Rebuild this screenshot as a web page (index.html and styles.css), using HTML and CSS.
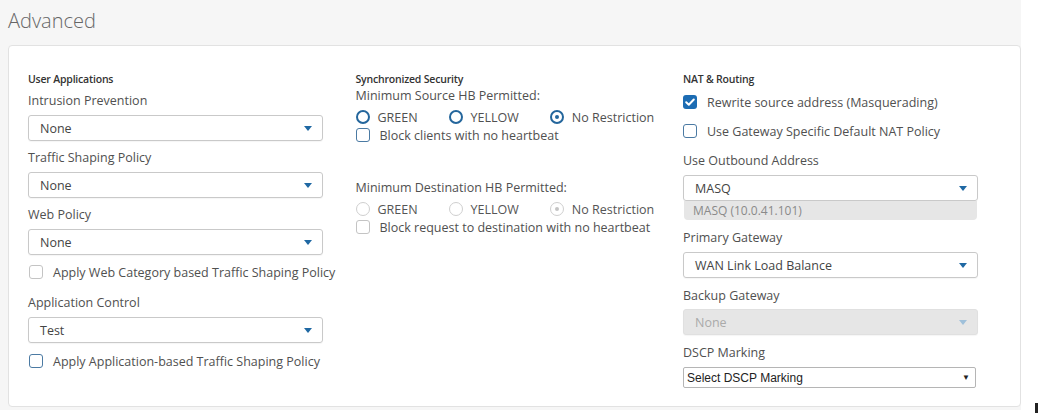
FILE: index.html
```html
<!DOCTYPE html>
<html lang="en">
<head>
  <meta charset="UTF-8">
  <meta name="viewport" content="width=device-width, initial-scale=1.0">
  <title>Advanced</title>
  <link rel="stylesheet" href="styles.css">
</head>
<body>
  <div class="page">
    <h2 class="title">Advanced</h2>
    <div class="card">
      <!-- User applications -->
      <div class="col">
        <div class="group-title">User Applications</div>
        <div class="label first">Intrusion Prevention</div>
        <div class="select"><span>None</span><i class="caret"></i></div>
        <div class="label">Traffic Shaping Policy</div>
        <div class="select"><span>None</span><i class="caret"></i></div>
        <div class="label">Web Policy</div>
        <div class="select"><span>None</span><i class="caret"></i></div>
        <label class="check off web-shaping"><span class="box"></span>Apply Web Category based Traffic Shaping Policy</label>
        <div class="label app-control">Application Control</div>
        <div class="select"><span>Test</span><i class="caret"></i></div>
        <label class="check app-shaping"><span class="box"></span>Apply Application-based Traffic Shaping Policy</label>
      </div>

      <!-- Synchronized security -->
      <div class="col">
        <div class="group-title">Synchronized Security</div>
        <div class="label hb">Minimum Source HB Permitted:</div>
        <div class="radios">
          <label class="radio"><span class="dot"></span>GREEN</label>
          <label class="radio"><span class="dot"></span>YELLOW</label>
          <label class="radio"><span class="dot on"></span>No Restriction</label>
        </div>
        <label class="check hb-check"><span class="box"></span>Block clients with no heartbeat</label>
        <div class="label hb dest">Minimum Destination HB Permitted:</div>
        <div class="radios disabled">
          <label class="radio"><span class="dot"></span>GREEN</label>
          <label class="radio"><span class="dot"></span>YELLOW</label>
          <label class="radio"><span class="dot on"></span>No Restriction</label>
        </div>
        <label class="check off hb-check"><span class="box"></span>Block request to destination with no heartbeat</label>
      </div>

      <!-- NAT & routing -->
      <div class="col nat">
        <div class="group-title">NAT &amp; Routing</div>
        <label class="check checked masq"><span class="box">
          <svg viewBox="0 0 14 14" width="14" height="14"><path d="M3.2 7.2l2.6 2.5 5-5.2" fill="none" stroke="#fff" stroke-width="2" stroke-linecap="round" stroke-linejoin="round"/></svg>
        </span>Rewrite source address (Masquerading)</label>
        <label class="check gw-nat"><span class="box"></span>Use Gateway Specific Default NAT Policy</label>
        <div class="label outbound">Use Outbound Address</div>
        <div class="select"><span>MASQ</span><i class="caret"></i></div>
        <div class="hint">MASQ (10.0.41.101)</div>
        <div class="label">Primary Gateway</div>
        <div class="select"><span>WAN Link Load Balance</span><i class="caret"></i></div>
        <div class="label">Backup Gateway</div>
        <div class="select disabled"><span>None</span><i class="caret"></i></div>
        <div class="label">DSCP Marking</div>
        <div class="native-select"><span>Select DSCP Marking</span><span class="arrow">&#9660;</span></div>
      </div>
    </div>
  </div>
  <div class="corner"></div>
</body>
</html>
```

FILE: styles.css
```css
body {
  margin: 0;
  background: #fff;
  font-family: "Open Sans", Arial, sans-serif;
  color: #4a4a4a;
}
.page {
  width: 1021px;
  height: 410px;
  background: #f6f6f6;
  padding: 0 0 0 8px;
  box-sizing: border-box;
}
.title {
  margin: 0;
  padding-top: 7px;
  height: 45px;
  box-sizing: border-box;
  font-size: 20px;
  font-weight: 300;
  line-height: 28px;
  color: #666;
}
.card {
  background: #fff;
  border: 1px solid #e2e2e2;
  border-radius: 4px;
  height: 362px;
  box-sizing: border-box;
  padding: 26px 0 0 19px;
  display: grid;
  grid-template-columns: 295px 295px 295px;
  column-gap: 32.5px;
}
.col {
  display: flex;
  flex-direction: column;
}
.group-title {
  font-size: 10.5px;
  font-weight: 600;
  line-height: 14px;
  color: #333;
  letter-spacing: -0.2px;
}
.label {
  font-size: 12.5px;
  line-height: 16px;
  margin-top: 9px;
  color: #505050;
}
.label.first { margin-top: 7px; }
.label.app-control { margin-top: 14px; }
.label.hb { margin-top: 2px; }
.label.hb.dest { margin-top: 36px; }
.nat .label { margin-top: 10px; }
.nat .label.outbound { margin-top: 13px; }

.select {
  margin-top: 6px;
  height: 26px;
  border: 1px solid #c9c9c9;
  border-radius: 3px;
  box-sizing: border-box;
  display: flex;
  align-items: center;
  justify-content: space-between;
  padding: 0 10px 0 11px;
  font-size: 12.5px;
  color: #444;
  box-shadow: 0 1px 1px rgba(0, 0, 0, 0.04);
}
.select.disabled {
  background: #e6e6e6;
  border-color: #e0e0e0;
  color: #aaa;
  margin-top: 5px;
}
.caret {
  width: 0;
  height: 0;
  border-left: 4px solid transparent;
  border-right: 4px solid transparent;
  border-top: 5px solid #1f68a3;
}
.select.disabled .caret { border-top-color: #9fc0da; }

.hint {
  height: 19px;
  background: #e6e6e6;
  border-radius: 0 0 4px 4px;
  margin: 0 1px;
  font-size: 12px;
  line-height: 19px;
  padding-left: 9px;
  color: #8a8a8a;
}

.native-select {
  margin-top: 6px;
  width: 293px;
  height: 21px;
  border: 1px solid #b5b5b5;
  border-radius: 2px;
  box-sizing: border-box;
  display: flex;
  align-items: center;
  justify-content: space-between;
  padding: 0 5px 0 3px;
  font-family: "Liberation Sans", Arial, sans-serif;
  font-size: 12px;
  color: #222;
}
.native-select .arrow {
  font-size: 8px;
  color: #222;
}

.check {
  display: flex;
  align-items: center;
  height: 18px;
  font-size: 12.5px;
  color: #505050;
  white-space: nowrap;
}
.check .box {
  width: 14px;
  height: 14px;
  box-sizing: border-box;
  border: 1.5px solid #4b7aa3;
  border-radius: 3px;
  margin: 0 10px 0 1px;
  flex: none;
  display: flex;
}
.check.off .box { border-color: #c4c4c4; }
.check.checked .box {
  background: #1c6cb3;
  border-color: #1c6cb3;
  border-width: 0;
}
.check.web-shaping { margin-top: 8px; }
.check.app-shaping { margin-top: 9px; }
.check.hb-check { margin-top: 0; }
.check.hb-check .box { margin-left: 0; }
.check.masq { margin-top: 7px; }
.check.gw-nat { margin-top: 11px; }
.nat .check .box { margin-left: 0; }

.radios {
  display: flex;
  height: 18px;
  margin-top: 4px;
  gap: 31px;
}
.radio {
  display: flex;
  align-items: center;
  font-size: 12.5px;
  color: #505050;
  white-space: nowrap;
}
.radio .dot {
  width: 14px;
  height: 14px;
  box-sizing: border-box;
  border: 2px solid #24669c;
  border-radius: 50%;
  margin-right: 8px;
  display: flex;
  align-items: center;
  justify-content: center;
}
.radio .dot.on::after {
  content: "";
  width: 4px;
  height: 4px;
  border-radius: 50%;
  background: #24669c;
}
.radios.disabled .radio { color: #555; }
.radios.disabled .dot {
  border: 1.5px solid #cfcfcf;
}
.radios.disabled .dot.on::after { background: #c4c4c4; }

.corner {
  position: fixed;
  right: 1px;
  bottom: 0;
  width: 3px;
  height: 10px;
  background: #222;
}
```
